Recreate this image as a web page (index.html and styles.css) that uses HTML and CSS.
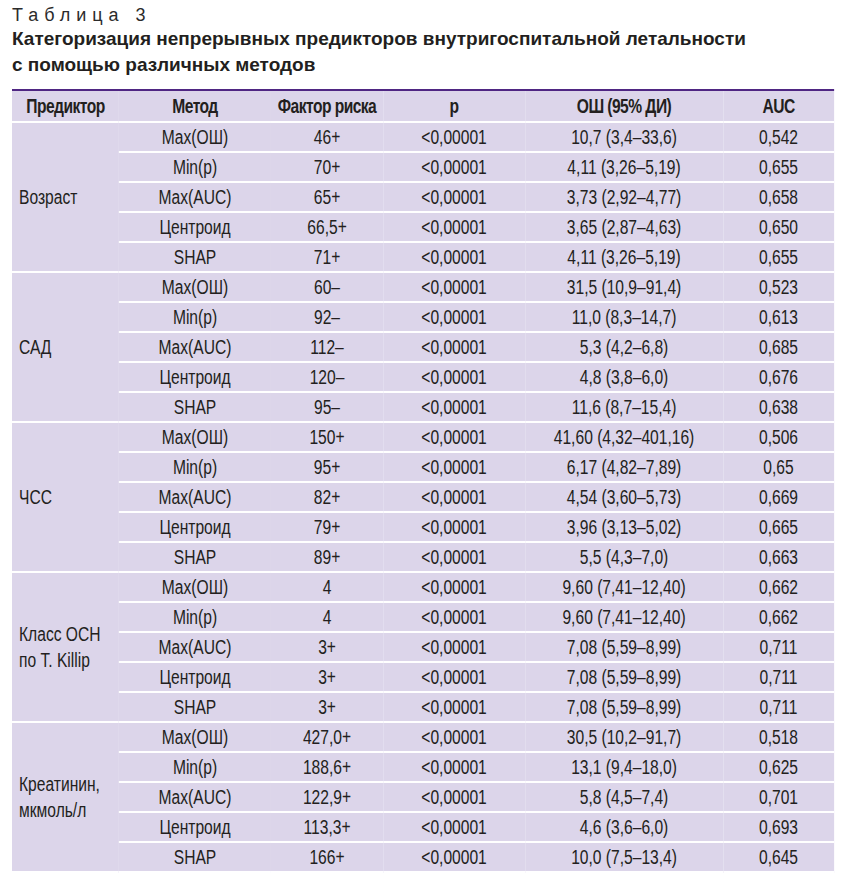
FILE: index.html
```html
<!DOCTYPE html>
<html lang="ru">
<head>
<meta charset="utf-8">
<title>Таблица 3</title>
<link rel="stylesheet" href="styles.css">
</head>
<body>
<div class="page">
  <div class="label">Таблица 3</div>
  <h1 class="caption">Категоризация непрерывных предикторов внутригоспитальной летальности<br>с помощью различных методов</h1>
  <table class="data">
    <colgroup>
      <col class="c1"><col class="c2"><col class="c3"><col class="c4"><col class="c5"><col class="c6">
    </colgroup>
    <thead>
      <tr><th>Предиктор</th><th>Метод</th><th>Фактор риска</th><th>p</th><th>ОШ (95% ДИ)</th><th>AUC</th></tr>
    </thead>
    <tbody>
      <tr><td class="pred" rowspan="5">Возраст</td><td>Max(ОШ)</td><td>46+</td><td>&lt;0,00001</td><td>10,7 (3,4–33,6)</td><td>0,542</td></tr>
      <tr><td>Min(p)</td><td>70+</td><td>&lt;0,00001</td><td>4,11 (3,26–5,19)</td><td>0,655</td></tr>
      <tr><td>Max(AUC)</td><td>65+</td><td>&lt;0,00001</td><td>3,73 (2,92–4,77)</td><td>0,658</td></tr>
      <tr><td>Центроид</td><td>66,5+</td><td>&lt;0,00001</td><td>3,65 (2,87–4,63)</td><td>0,650</td></tr>
      <tr><td>SHAP</td><td>71+</td><td>&lt;0,00001</td><td>4,11 (3,26–5,19)</td><td>0,655</td></tr>

      <tr><td class="pred" rowspan="5">САД</td><td>Max(ОШ)</td><td>60–</td><td>&lt;0,00001</td><td>31,5 (10,9–91,4)</td><td>0,523</td></tr>
      <tr><td>Min(p)</td><td>92–</td><td>&lt;0,00001</td><td>11,0 (8,3–14,7)</td><td>0,613</td></tr>
      <tr><td>Max(AUC)</td><td>112–</td><td>&lt;0,00001</td><td>5,3 (4,2–6,8)</td><td>0,685</td></tr>
      <tr><td>Центроид</td><td>120–</td><td>&lt;0,00001</td><td>4,8 (3,8–6,0)</td><td>0,676</td></tr>
      <tr><td>SHAP</td><td>95–</td><td>&lt;0,00001</td><td>11,6 (8,7–15,4)</td><td>0,638</td></tr>

      <tr><td class="pred" rowspan="5">ЧСС</td><td>Max(ОШ)</td><td>150+</td><td>&lt;0,00001</td><td>41,60 (4,32–401,16)</td><td>0,506</td></tr>
      <tr><td>Min(p)</td><td>95+</td><td>&lt;0,00001</td><td>6,17 (4,82–7,89)</td><td>0,65</td></tr>
      <tr><td>Max(AUC)</td><td>82+</td><td>&lt;0,00001</td><td>4,54 (3,60–5,73)</td><td>0,669</td></tr>
      <tr><td>Центроид</td><td>79+</td><td>&lt;0,00001</td><td>3,96 (3,13–5,02)</td><td>0,665</td></tr>
      <tr><td>SHAP</td><td>89+</td><td>&lt;0,00001</td><td>5,5 (4,3–7,0)</td><td>0,663</td></tr>

      <tr><td class="pred" rowspan="5">Класс ОСН<br>по Т. Killip</td><td>Max(ОШ)</td><td>4</td><td>&lt;0,00001</td><td>9,60 (7,41–12,40)</td><td>0,662</td></tr>
      <tr><td>Min(p)</td><td>4</td><td>&lt;0,00001</td><td>9,60 (7,41–12,40)</td><td>0,662</td></tr>
      <tr><td>Max(AUC)</td><td>3+</td><td>&lt;0,00001</td><td>7,08 (5,59–8,99)</td><td>0,711</td></tr>
      <tr><td>Центроид</td><td>3+</td><td>&lt;0,00001</td><td>7,08 (5,59–8,99)</td><td>0,711</td></tr>
      <tr><td>SHAP</td><td>3+</td><td>&lt;0,00001</td><td>7,08 (5,59–8,99)</td><td>0,711</td></tr>

      <tr><td class="pred" rowspan="5">Креатинин,<br>мкмоль/л</td><td>Max(ОШ)</td><td>427,0+</td><td>&lt;0,00001</td><td>30,5 (10,2–91,7)</td><td>0,518</td></tr>
      <tr><td>Min(p)</td><td>188,6+</td><td>&lt;0,00001</td><td>13,1 (9,4–18,0)</td><td>0,625</td></tr>
      <tr><td>Max(AUC)</td><td>122,9+</td><td>&lt;0,00001</td><td>5,8 (4,5–7,4)</td><td>0,701</td></tr>
      <tr><td>Центроид</td><td>113,3+</td><td>&lt;0,00001</td><td>4,6 (3,6–6,0)</td><td>0,693</td></tr>
      <tr><td>SHAP</td><td>166+</td><td>&lt;0,00001</td><td>10,0 (7,5–13,4)</td><td>0,645</td></tr>
    </tbody>
  </table>
</div>
</body>
</html>
```

FILE: styles.css
```css
html, body {
  margin: 0;
  padding: 0;
  background: #ffffff;
}

body {
  overflow: hidden;
}

.page {
  padding: 4px 0 0 12px;
  color: #231f20;
  font-family: "Liberation Sans", Arial, sans-serif;
}

.label {
  font-size: 18px;
  line-height: 22px;
  letter-spacing: 6px;
  color: #2b2b2b;
}

.caption {
  margin: 0;
  font-size: 19px;
  line-height: 26px;
  font-weight: bold;
  color: #231f20;
}

/* The table is set in a condensed face: Liberation Sans scaled to 78% width. */
.data {
  margin-top: 11px;
  width: 1053.9px;
  table-layout: fixed;
  border-collapse: separate;
  border-spacing: 0;
  border-top: 2px solid #4f2683;
  font-family: "Liberation Sans", Arial, sans-serif;
  font-size: 20px;
  color: #231f20;
  transform: scaleX(0.78);
  transform-origin: 0 0;
}

.c1 { width: 137.2px; }
.c2 { width: 194.9px; }
.c3 { width: 143.6px; }
.c4 { width: 182.1px; }
.c5 { width: 253.8px; }
.c6 { width: 142.3px; }

.data th,
.data td {
  background: #dcd5ea;
  border-bottom: 2px solid #ffffff;
  padding: 0;
  text-align: center;
  vertical-align: middle;
  line-height: 24px;
  white-space: nowrap;
}

.data th {
  font-weight: bold;
  letter-spacing: -0.7px;
}

.data thead tr { height: 32px; }
.data tbody tr { height: 30px; }

.data .pred {
  text-align: left;
  padding-left: 9px;
  line-height: 26px;
}
```
